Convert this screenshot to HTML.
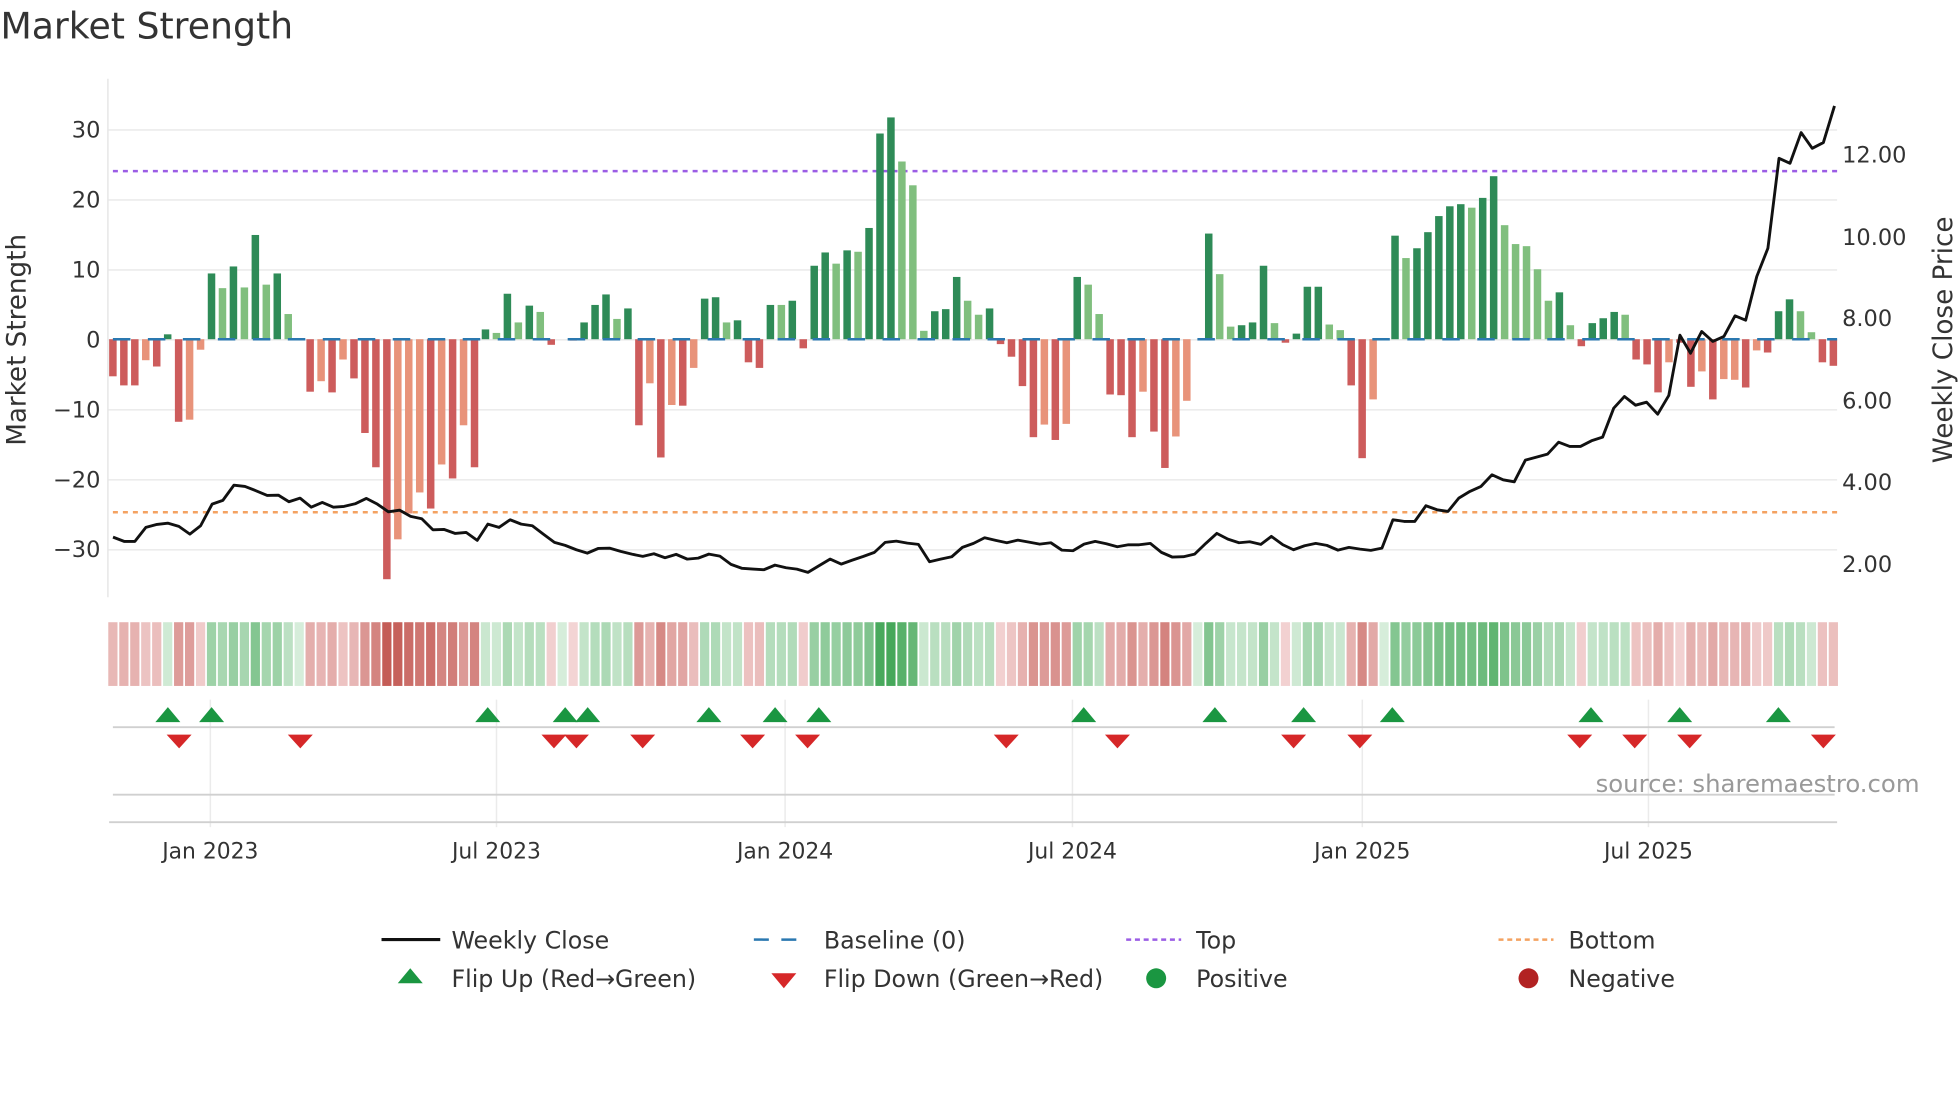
<!DOCTYPE html>
<html><head><meta charset="utf-8"><style>
html,body{margin:0;padding:0;background:#fff;}
svg{display:block;font-family:"DejaVu Sans","Liberation Sans",sans-serif;}
</style></head><body>
<svg id="s" width="1960" height="1102" viewBox="0 0 1568 882" xmlns="http://www.w3.org/2000/svg">
<rect width="1568" height="882" fill="#fff"/>
<text x="0" y="31" font-size="29" fill="#333">Market Strength</text>
<g id="grid" stroke="#ececec" stroke-width="1.3"></g>
<line x1="86" y1="63" x2="86" y2="478" stroke="#e6e6e6" stroke-width="1.2"/>
<g font-size="18" fill="#333" text-anchor="end">
<text x="80" y="110">30</text><text x="80" y="166">20</text><text x="80" y="222">10</text><text x="80" y="278">0</text>
<text x="80" y="334">−10</text><text x="80" y="390">−20</text><text x="80" y="446">−30</text>
</g>
<g font-size="18" fill="#333">
<text x="1474" y="130">12.00</text><text x="1474" y="196">10.00</text><text x="1474" y="261">8.00</text>
<text x="1474" y="327">6.00</text><text x="1474" y="392">4.00</text><text x="1474" y="458">2.00</text>
</g>
<text transform="translate(20,272) rotate(-90)" font-size="21" fill="#333" text-anchor="middle">Market Strength</text>
<text transform="translate(1562,272) rotate(-90)" font-size="21" fill="#333" text-anchor="middle">Weekly Close Price</text>
<line x1="90" y1="137" x2="1470" y2="137" stroke="#9b5de5" stroke-width="2" stroke-dasharray="4,4"/>
<line x1="90" y1="410" x2="1470" y2="410" stroke="#f4a261" stroke-width="2" stroke-dasharray="4,4"/>
<g id="bars"></g>
<line x1="90" y1="271.5" x2="1470" y2="271.5" stroke="#2a78b0" stroke-width="2" stroke-dasharray="14,14"/>
<polyline id="price" fill="none" stroke="#111" stroke-width="2.3" stroke-linejoin="round"/>
<g id="strip"></g>
<g id="vgrid" stroke="#ebebeb" stroke-width="1.2"></g>
<line x1="90" y1="582" x2="1468" y2="582" stroke="#d0d0d0" stroke-width="1.5"/>
<line x1="90" y1="636" x2="1468" y2="636" stroke="#d0d0d0" stroke-width="1.5"/>
<line x1="87" y1="658" x2="1470" y2="658" stroke="#d0d0d0" stroke-width="1.5"/>
<g id="marks"></g>
<text x="1536" y="634" font-size="19.5" fill="#999" text-anchor="end">source: sharemaestro.com</text>
<g font-size="17.5" fill="#333" text-anchor="middle">
<text x="168" y="687">Jan 2023</text><text x="397" y="687">Jul 2023</text><text x="628" y="687">Jan 2024</text>
<text x="858" y="687">Jul 2024</text><text x="1090" y="687">Jan 2025</text><text x="1319" y="687">Jul 2025</text>
</g>
<g font-size="19" fill="#333">
<line x1="305" y1="752" x2="352" y2="752" stroke="#111" stroke-width="2.5"/>
<text x="361" y="759">Weekly Close</text>
<line x1="603" y1="752" x2="647" y2="752" stroke="#2a78b0" stroke-width="2" stroke-dasharray="12,10"/>
<text x="659" y="759">Baseline (0)</text>
<line x1="901" y1="752" x2="945" y2="752" stroke="#9b5de5" stroke-width="2" stroke-dasharray="4,3"/>
<text x="957" y="759">Top</text>
<line x1="1199" y1="752" x2="1243" y2="752" stroke="#f4a261" stroke-width="2" stroke-dasharray="4,3"/>
<text x="1255" y="759">Bottom</text>
<polygon points="318,787 338,787 328,775" fill="#1a9641"/>
<text x="361" y="790">Flip Up (Red→Green)</text>
<polygon points="617,779 637,779 627,791" fill="#d62728"/>
<text x="659" y="790">Flip Down (Green→Red)</text>
<circle cx="925" cy="783" r="8" fill="#1a9641"/>
<text x="957" y="790">Positive</text>
<circle cx="1223" cy="783" r="8" fill="#b22222"/>
<text x="1255" y="790">Negative</text>
</g>
</svg>
<script>
var NS="http://www.w3.org/2000/svg";
function el(p,t,a){var e=document.createElementNS(NS,t);for(var k in a)e.setAttribute(k,a[k]);p.appendChild(e);return e;}
var g=document.getElementById('grid');
[104,160,216,272,328,384,440].forEach(function(y){el(g,'line',{x1:86,x2:1470,y1:y,y2:y});});
var vg=document.getElementById('vgrid');
[168,397,628,858,1090,1319].forEach(function(x){el(vg,'line',{x1:x,x2:x,y1:560,y2:662});});
var V=[[-5.3,0],[-6.6,0],[-6.6,0],[-3,1],[-3.9,0],[0.7,0],[-11.8,0],[-11.5,1],[-1.5,1],[9.4,0],[7.3,1],[10.4,0],[7.4,1],[14.9,0],[7.8,1],[9.4,0],[3.6,1],[0,0],[-7.5,0],[-6,1],[-7.6,0],[-2.9,1],[-5.6,0],[-13.4,0],[-18.3,0],[-34.3,0],[-28.6,1],[-24.9,1],[-21.9,1],[-24.2,0],[-17.9,1],[-19.9,0],[-12.3,1],[-18.3,0],[1.4,0],[0.9,1],[6.5,0],[2.4,1],[4.8,0],[3.9,1],[-0.8,0],[0,0],[-0.2,0],[2.4,0],[4.9,0],[6.4,0],[2.9,1],[4.4,0],[-12.3,0],[-6.3,1],[-16.9,0],[-9.4,1],[-9.5,0],[-4.1,1],
[5.8,0],[6.0,0],[2.4,1],[2.7,0],[-3.3,0],[-4.1,0],[4.9,0],[4.9,1],[5.5,0],[-1.3,0],[10.5,0],[12.4,0],[10.8,1],[12.7,0],[12.5,1],[15.9,0],[29.4,0],[31.7,0],[25.4,1],[22,1],[1.2,1],[4,0],[4.3,0],[8.9,0],[5.5,1],[3.5,1],[4.4,0],[-0.7,0],[-2.5,0],[-6.7,0],[-14,0],[-12.2,1],[-14.4,0],[-12.1,1],[8.9,0],[7.8,1],[3.6,1],[-7.9,0],[-8,0],[-14,0],[-7.5,1],[-13.2,0],[-18.4,0],[-13.9,1],[-8.8,1],[0,0],[15.1,0],[9.3,1],[1.8,1],[2,0],[2.4,0],
[10.5,0],[2.3,1],[-0.5,0],[0.8,0],[7.5,0],[7.5,0],[2.1,1],[1.3,1],[-6.6,0],[-17,0],[-8.6,1],[0,0],[14.8,0],[11.6,1],[13,0],[15.3,0],[17.6,0],[19,0],[19.3,0],[18.8,1],[20.2,0],[23.3,0],[16.3,1],[13.6,1],[13.3,1],[10,1],[5.5,1],[6.7,0],[2,1],[-1,0],[2.3,0],[3,0],[3.9,0],[3.5,1],[-2.9,0],[-3.6,0],[-7.6,0],[-3.3,1],[-0.5,0],[-6.8,0],[-4.6,1],[-8.6,0],[-5.7,1],[-5.8,1],[-6.9,0],[-1.6,1],[-1.9,0],[4,0],[5.7,0],[4,1],[1,1],[-3.3,0],[-3.8,0]];
var N=V.length, x0=90, dx=(1467-90)/(N-1);
var b=document.getElementById('bars'), st=document.getElementById('strip');
function mix(a,c,t){return 'rgb('+[0,1,2].map(function(i){return Math.round(a[i]+(c[i]-a[i])*t);}).join(',')+')';}
V.forEach(function(v,i){
 var x=x0+i*dx, val=v[0], h=Math.abs(val)*5.6;
 var col = val>=0 ? (v[1]?'#80bf7e':'#2e8b57') : (v[1]?'#e8937a':'#cd5c5c');
 if(h>0.3) el(b,'rect',{x:(x-3).toFixed(2),y:(val>=0?271.5-h:271.5).toFixed(2),width:6,height:h.toFixed(2),fill:col});
 var t=Math.min(1,Math.abs(val)/30);
 var c = val>=0 ? mix([214,237,218],[70,168,90],Math.pow(t,0.8)) : mix([244,214,214],[196,92,86],Math.pow(t,0.8));
 el(st,'rect',{x:(x-dx/2+0.7).toFixed(2),y:498,width:(dx-1.4).toFixed(2),height:51,fill:c});
});
var z1=[[33,1312],[62,1325],[90,1325],[119,1283],[148,1274],[176,1270],[205,1280],[234,1303],[262,1278],[292,1213],[320,1202],[349,1156],[378,1160],[407,1173],[436,1187],[465,1186],[493,1206],[522,1195],[551,1222],[580,1208],[609,1222],[637,1220],[666,1212],[695,1196],[724,1213],[753,1236],[782,1231],[811,1250],[840,1257],[869,1290],[898,1289],[927,1301],[956,1298],[985,1322],[1013,1273],[1042,1283],[1071,1260],[1100,1273],[1129,1278],[1158,1303],[1187,1328],[1215,1337],[1244,1350],[1273,1360],[1302,1346],[1331,1345],[1360,1355],[1389,1363],[1418,1370],[1447,1362],[1476,1374],[1505,1364],[1534,1378],[1563,1375]];
var z2=[[75,1363],[104,1369],[133,1394],[162,1406],[190,1408],[219,1410],[248,1396],[277,1404],[305,1408],[334,1418],[363,1398],[392,1378],[421,1393],[450,1381],[479,1370],[508,1358],[536,1328],[565,1324],[594,1330],[623,1334],[652,1386],[681,1378],[710,1371],[738,1343],[767,1331],[796,1314],[825,1322],[854,1329],[883,1321],[912,1327],[940,1333],[969,1329],[998,1351],[1027,1353],[1056,1333],[1085,1325],[1114,1332],[1143,1341],[1172,1335],[1200,1335],[1229,1331],[1258,1358],[1287,1372],[1316,1371],[1345,1363],[1374,1331],[1403,1301],[1432,1318],[1461,1329],[1489,1326],[1518,1334]];
var z3=[[30,1310],[60,1335],[88,1350],[117,1338],[146,1331],[175,1337],[204,1351],[233,1343],[262,1348],[290,1352],[319,1345],[348,1260],[377,1265],[405,1265],[434,1218],[463,1230],[492,1235],[520,1195],[549,1175],[578,1160],[607,1125],[636,1140],[665,1146],[694,1081],[723,1072],[752,1063],[781,1027],[810,1040],[838,1040],[867,1023],[896,1012],[925,925],[953,890],[982,916],[1011,907],[1040,943],[1069,887],[1098,706],[1126,760],[1155,695],[1184,725],[1213,710],[1242,648],[1270,661],[1299,530],[1328,445],[1357,175],[1386,190],[1415,98],[1444,145],[1473,128],[1502,18]];
var pts=[];
function add(arr,ox){arr.forEach(function(p){pts.push(((ox+p[0]/2.613)/1.25).toFixed(1)+','+((100+p[1]/3)/1.25).toFixed(1));});}
add(z1,100);add(z2,680);add(z3,1260);
document.getElementById('price').setAttribute('points',pts.join(' '));
var m=document.getElementById('marks');
[134,169,390,452,470,567,620,655,867,972,1043,1114,1273,1344,1423].forEach(function(x){el(m,'polygon',{points:(x-10)+',578 '+(x+10)+',578 '+x+',566',fill:'#1a9641'});});
[143,240,443,461,514,602,646,805,894,1035,1088,1264,1308,1352,1459].forEach(function(x){el(m,'polygon',{points:(x-10)+',588 '+(x+10)+',588 '+x+',599',fill:'#d62728'});});
</script>
</body></html>
